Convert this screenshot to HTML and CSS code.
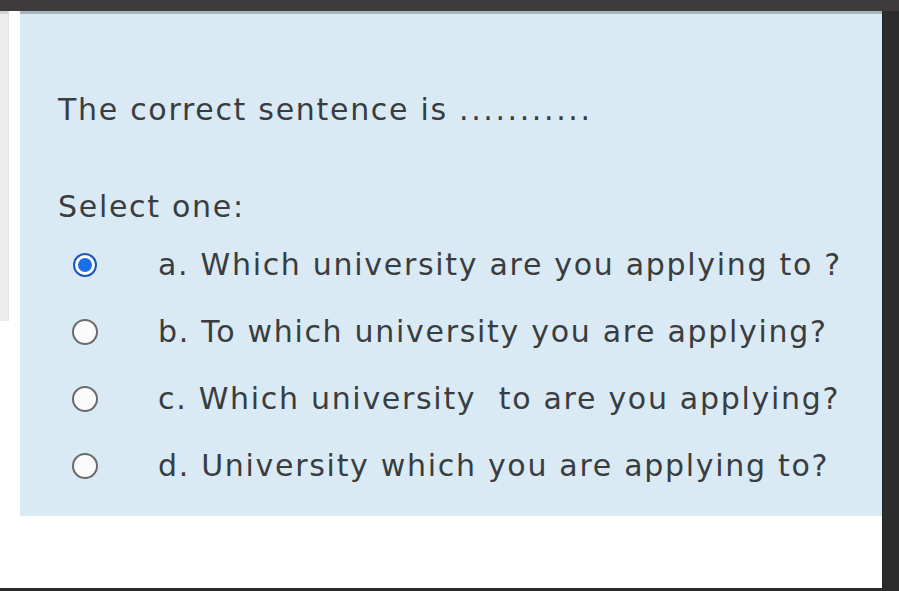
FILE: index.html
```html
<!DOCTYPE html>
<html lang="en">
<head>
    <meta charset="UTF-8">
    <meta name="viewport" content="width=device-width, initial-scale=1.0">
    <title>Question</title>
    <link rel="stylesheet" href="styles.css">
</head>
<body>
    <div class="topbar"></div>
    <div class="main">
        <div class="left">
            <div class="sidebar"></div>
            <div class="gutter"></div>
            <div class="content">
                <div class="rule"></div>
                <div class="formulation">
                    <p class="qtext">The correct sentence is <span class="dots">...........</span></p>
                    <p class="prompt">Select one:</p>
                    <div class="answer">
                        <label class="option"><span class="radio checked"></span><span>a. Which university are you applying to ?</span></label>
                        <label class="option"><span class="radio"></span><span>b. To which university you are applying?</span></label>
                        <label class="option"><span class="radio"></span><span>c. Which university&nbsp; to are you applying?</span></label>
                        <label class="option"><span class="radio"></span><span>d. University which you are applying to?</span></label>
                    </div>
                </div>
            </div>
        </div>
        <div class="scroll"></div>
    </div>
    <div class="bottombar"></div>
</body>
</html>
```

FILE: styles.css
```css
body {
    margin: 0;
    background: #fff;
    font-family: "DejaVu Sans", Verdana, sans-serif;
    color: #3a3d40;
    height: 591px;
    display: flex;
    flex-direction: column;
    overflow: hidden;
}
.topbar { height: 11px; background: #3d3b3c; }
.main { flex: 1; display: flex; }
.left { flex: 1; display: flex; align-items: flex-start; }
.sidebar { width: 8px; height: 307px; background: #efedeb; border-right: 1px solid #e6e2df; border-top: 3px solid #d4d2d0; }
.gutter { width: 11px; }
.content { flex: 1; }
.rule { height: 3px; background: #a7b6bd; }
.formulation { background: #d9eaf5; padding: 76px 0 17px 38px; }
.qtext, .prompt, .option { font-size: 30px; letter-spacing: 1.7px; }
.qtext { margin: 0; line-height: 40px; }
.qtext .dots { letter-spacing: 2.6px; }
.prompt { margin: 57px 0 0; line-height: 40px; }
.answer { margin-top: 4px; }
.option { display: flex; align-items: center; height: 67px; padding-left: 14px; }
.radio {
    width: 22px; height: 22px; border-radius: 50%;
    border: 2px solid #6a6a6a; background: #fbfbfb;
    margin-right: 60px; flex-shrink: 0;
}
.radio.checked {
    width: 14px; height: 14px; margin-left: 3px; margin-right: 63px;
    background: #1a6fe6; border: 3px solid #fff;
    box-shadow: 0 0 0 2px #1758b8;
}
.scroll { width: 16px; background: #2c2c2c; border-left: 1px solid #1f2628; }
.bottombar { height: 3px; background: #2b2b2b; }
```
